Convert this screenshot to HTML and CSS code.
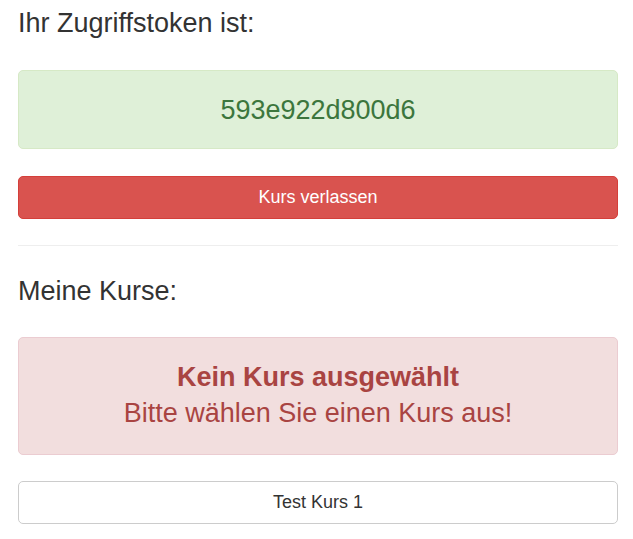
FILE: index.html
```html
<!DOCTYPE html>
<html lang="de">
<head>
<meta charset="utf-8">
<title>Zugriffstoken</title>
<link rel="stylesheet" href="styles.css">
</head>
<body>
<main class="page">
  <h3 class="title title-first">Ihr Zugriffstoken ist:</h3>
  <div class="alert alert-success">
    <div class="token">593e922d800d6</div>
  </div>
  <button class="btn btn-danger" type="button">Kurs verlassen</button>
  <hr class="divider">
  <h3 class="title title-second">Meine Kurse:</h3>
  <div class="alert alert-danger">
    <div class="alert-heading">Kein Kurs ausgewählt</div>
    <div class="alert-text">Bitte wählen Sie einen Kurs aus!</div>
  </div>
  <button class="btn btn-default" type="button">Test Kurs 1</button>
</main>
</body>
</html>
```

FILE: styles.css
```css
html, body {
  margin: 0;
  padding: 0;
  background: #ffffff;
}

body {
  font-family: "Liberation Sans", Arial, Helvetica, sans-serif;
  color: #333333;
}

.page {
  width: 600px;
  margin-left: 18px;
  display: flex;
  flex-direction: column;
}

.title {
  margin: 0;
  font-size: 27px;
  font-weight: normal;
  line-height: 30px;
  color: #333333;
}

.title-first {
  margin-top: 8px;
}

.title-second {
  margin-top: 30px;
}

.alert {
  box-sizing: border-box;
  border: 1px solid transparent;
  border-radius: 5px;
  text-align: center;
}

.alert-success {
  margin-top: 32px;
  padding: 24px 15px 23px;
  background: #dff0d8;
  border-color: #d6e9c6;
  color: #3c763d;
}

.token {
  font-size: 27px;
  line-height: 30px;
}

.alert-danger {
  margin-top: 31px;
  padding: 21px 15px 23px;
  background: #f2dede;
  border-color: #ebccd1;
  color: #a94442;
  font-size: 27px;
  line-height: 36px;
}

.alert-heading {
  font-weight: bold;
}

.btn {
  box-sizing: border-box;
  width: 100%;
  margin: 0;
  padding: 10px 16px;
  border: 1px solid transparent;
  border-radius: 5px;
  font-family: "Liberation Sans", Arial, Helvetica, sans-serif;
  font-size: 18px;
  line-height: 21px;
  text-align: center;
  cursor: pointer;
}

.btn-danger {
  margin-top: 27px;
  background: #d9534f;
  border-color: #d43f3a;
  color: #ffffff;
}

.btn-default {
  margin-top: 26px;
  background: #ffffff;
  border-color: #cccccc;
  color: #333333;
}

.divider {
  margin: 26px 0 0;
  border: 0;
  border-top: 1px solid #eeeeee;
  height: 0;
}
```
